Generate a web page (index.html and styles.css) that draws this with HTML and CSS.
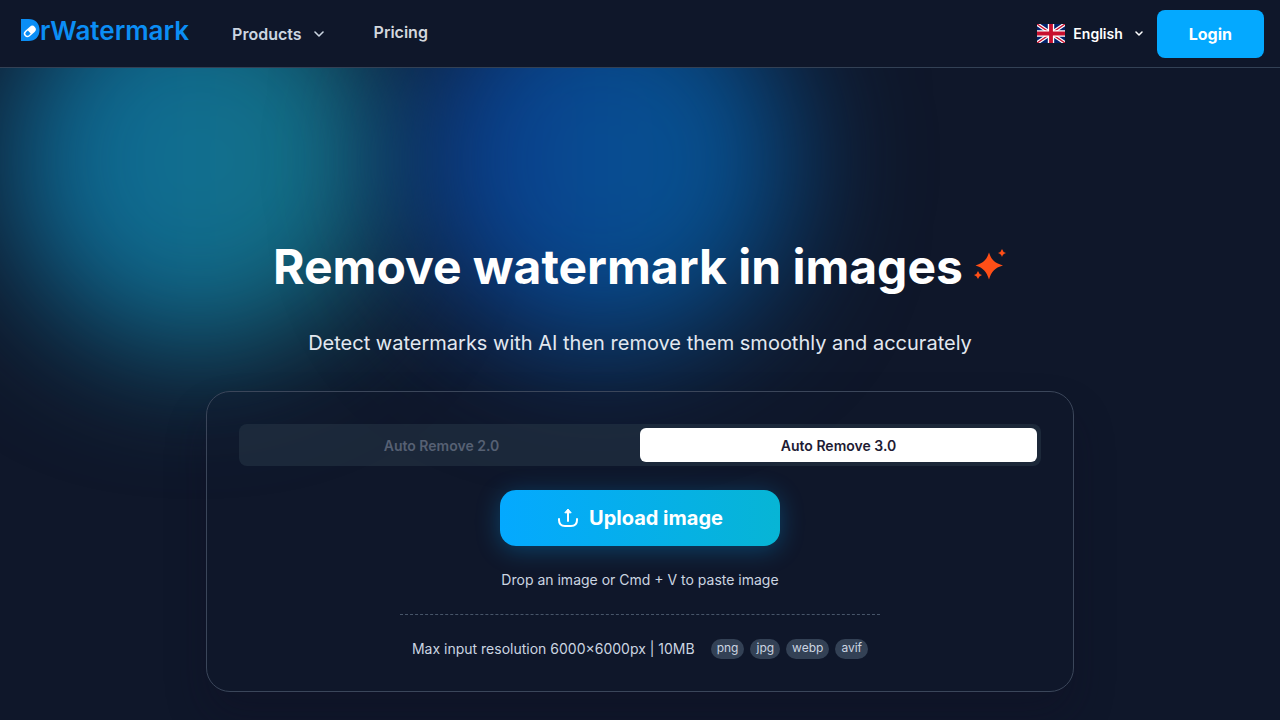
FILE: index.html
```html
<!DOCTYPE html>
<html lang="en">
<head>
<meta charset="utf-8">
<meta name="viewport" content="width=device-width, initial-scale=1">
<title>DrWatermark</title>
<link rel="stylesheet" href="styles.css">
</head>
<body>
<header class="topbar">
  <a class="logo" href="#" aria-label="DrWatermark">
    <svg class="logo-mark" width="19" height="22" viewBox="0 0 19 22" aria-hidden="true">
      <path d="M0 0h7.500C14.500 0 18.500 4.500 18.500 11S14.500 22 7.500 22H0z" fill="#0b8ef5"/>
      <g transform="rotate(-42 8.500 12.500)"><rect x="2" y="9.200" width="13.500" height="7" rx="3.500" fill="#fff"/><path d="M8 10.600H5.600a2.100 2.100 0 0 0 0 4.200H8z" fill="#0b8ef5"/></g>
    </svg>
    <span>rWatermark</span>
  </a>
  <nav class="nav">
    <button class="nav-item" type="button">Products
      <svg width="10" height="6" viewBox="0 0 10 6" aria-hidden="true"><path d="M1 1l4 4 4-4" fill="none" stroke="currentColor" stroke-width="1.600" stroke-linecap="round" stroke-linejoin="round"/></svg>
    </button>
    <a class="nav-link" href="#">Pricing</a>
  </nav>
  <div class="actions">
    <button class="language" type="button">
      <svg width="28" height="19" viewBox="0 0 28 19" aria-hidden="true">
        <rect width="28" height="19" fill="#012169"/>
        <path d="M0 0l28 19M28 0L0 19" stroke="#fff" stroke-width="3.800"/>
        <path d="M0 0l28 19M28 0L0 19" stroke="#c8102e" stroke-width="1.400"/>
        <path d="M14 0v19M0 9.500h28" stroke="#fff" stroke-width="6.400"/>
        <path d="M14 0v19M0 9.500h28" stroke="#c8102e" stroke-width="3.800"/>
      </svg>
      <span>English</span>
      <svg class="caret" width="8" height="5" viewBox="0 0 8 5" aria-hidden="true"><path d="M1 1l3 3 3-3" fill="none" stroke="currentColor" stroke-width="1.500" stroke-linecap="round" stroke-linejoin="round"/></svg>
    </button>
    <button class="login" type="button">Login</button>
  </div>
</header>
<main class="hero">
  <div class="glow glow-teal"></div>
  <div class="glow glow-blue"></div>
  <h1 class="title">Remove watermark in images
    <svg class="sparkle" width="34" height="34" viewBox="0 0 34 34" aria-hidden="true"><g fill="#ff4f17"><path d="M16 5.500C18.500 13 21.500 16 30 18.500 21.500 21 18.500 24.500 16 32.500 13.500 24.500 10.500 21 2.500 18.500 10.500 16 13.500 13 16 5.500z"/><path d="M29 2q.8 3.200 4 4-3.200.8-4 4-.8-3.200-4-4 3.200-.8 4-4z"/><path d="M5 24q.8 3.200 4 4-3.200.8-4 4-.8-3.200-4-4 3.200-.8 4-4z"/></g></svg>
  </h1>
  <p class="subtitle">Detect watermarks with AI then remove them smoothly and accurately</p>
  <section class="card">
    <div class="tabs">
      <button class="tab" type="button">Auto Remove 2.0</button>
      <button class="tab tab-active" type="button">Auto Remove 3.0</button>
    </div>
    <button class="upload" type="button">
      <svg width="22" height="20" viewBox="0 0 22 20" aria-hidden="true"><path d="M2 11v1c0 4 2 6 6 6h6c4 0 6-2 6-6v-1M11 13V4" fill="none" stroke="#fff" stroke-width="2" stroke-linecap="round"/><path d="M11 1l3.200 3.800H7.800z" fill="#fff" stroke="#fff" stroke-linejoin="round"/></svg>
      Upload image
    </button>
    <p class="hint">Drop an image or Cmd + V to paste image</p>
    <div class="limits">
      <span>Max input resolution 6000×6000px | 10MB</span>
      <ul class="formats"><li>png</li><li>jpg</li><li>webp</li><li>avif</li></ul>
    </div>
  </section>
</main>
</body>
</html>
```
FILE: styles.css
```css
* { box-sizing: border-box; }
body {
  margin: 0;
  min-height: 100vh;
  display: flex;
  flex-direction: column;
  background: #0f172a;
  color: #fff;
  font-family: Inter, "Liberation Sans", sans-serif;
}
button {
  border: 0;
  padding: 0;
  background: none;
  color: inherit;
  font: inherit;
  cursor: pointer;
}
a { color: inherit; text-decoration: none; }
p, h1, ul { margin: 0; }
.topbar {
  display: flex;
  align-items: center;
  height: 68px;
  padding: 0 16px 0 21px;
  border-bottom: 1px solid #334155;
  background: #0f172a;
}
.logo {
  display: flex;
  align-items: center;
  height: 30px;
  margin-bottom: 7px;
  color: #0b8ef5;
  font-size: 26px;
  font-weight: 600;
}
.nav { display: flex; align-items: center; gap: 50px; margin-left: 43px; }
.nav-item { display: flex; align-items: center; gap: 12px; color: #cbd5e1; font-size: 16px; font-weight: 600; }
.nav-link { padding-bottom: 3px; color: #d3d7de; font-size: 16px; font-weight: 600; }
.actions { display: flex; align-items: center; gap: 14px; margin-left: auto; }
.language { display: flex; align-items: center; gap: 8px; font-size: 14px; font-weight: 600; }
.caret { margin-left: 4px; }
.login {
  height: 48px;
  padding: 0 32px;
  border-radius: 8px;
  background: #04a9ff;
  font-size: 16px;
  font-weight: 700;
}
.hero {
  position: relative;
  isolation: isolate;
  flex: 1;
  display: flex;
  flex-direction: column;
  align-items: center;
  padding: 168px 24px 28px;
  overflow: hidden;
}
.glow {
  position: absolute;
  z-index: -1;
  width: 384px;
  height: 384px;
  border-radius: 50%;
  filter: blur(64px);
}
.glow-teal { top: -100px; left: 4px; background: linear-gradient(90deg, #0c6797, #167586); }
.glow-blue { top: -100px; left: 408px; background: linear-gradient(90deg, #0b3a8e, #075292 70%); }
.title {
  display: flex;
  align-items: center;
  gap: 10px;
  font-size: 48px;
  line-height: 62px;
  font-weight: 700;
}
.sparkle { margin-bottom: 6px; }
.subtitle { margin-top: 30px; color: #e2e8f0; font-size: 20px; line-height: 30px; }
.card {
  display: flex;
  flex-direction: column;
  align-items: center;
  width: 100%;
  max-width: 868px;
  margin-top: 33px;
  padding: 32px;
  border: 1px solid #3b465a;
  border-radius: 24px;
  background: rgba(15, 23, 42, 0.3);
  box-shadow: 0 24px 40px rgba(15, 14, 34, 0.3);
}
.tabs {
  display: flex;
  width: 100%;
  padding: 4px;
  border-radius: 8px;
  background: rgba(36, 51, 69, 0.6);
}
.tab { flex: 1; height: 34px; border-radius: 6px; color: #566073; font-size: 14px; font-weight: 600; }
.tab-active { background: #fff; color: #1e1b33; }
.upload {
  display: flex;
  align-items: center;
  justify-content: center;
  gap: 10px;
  width: 280px;
  height: 56px;
  margin-top: 24px;
  border-radius: 16px;
  background: linear-gradient(90deg, #04a9ff, #07b5d5);
  box-shadow: 0 4px 24px rgba(4, 169, 255, 0.3);
  font-size: 20px;
  font-weight: 700;
}
.hint { margin-top: 24px; color: #cbd5e1; font-size: 14px; line-height: 20px; }
.limits {
  display: flex;
  align-items: center;
  justify-content: center;
  gap: 16px;
  width: 100%;
  max-width: 480px;
  margin-top: 24px;
  padding-top: 24px;
  border-top: 1px dashed #475569;
  color: #cbd5e1;
  font-size: 14px;
  line-height: 20px;
  white-space: nowrap;
}
.formats { display: flex; gap: 6px; padding: 0; list-style: none; }
.formats li {
  height: 20px;
  padding: 0 6px;
  border-radius: 10px;
  background: #334155;
  font-size: 12px;
  line-height: 18px;
}
```
